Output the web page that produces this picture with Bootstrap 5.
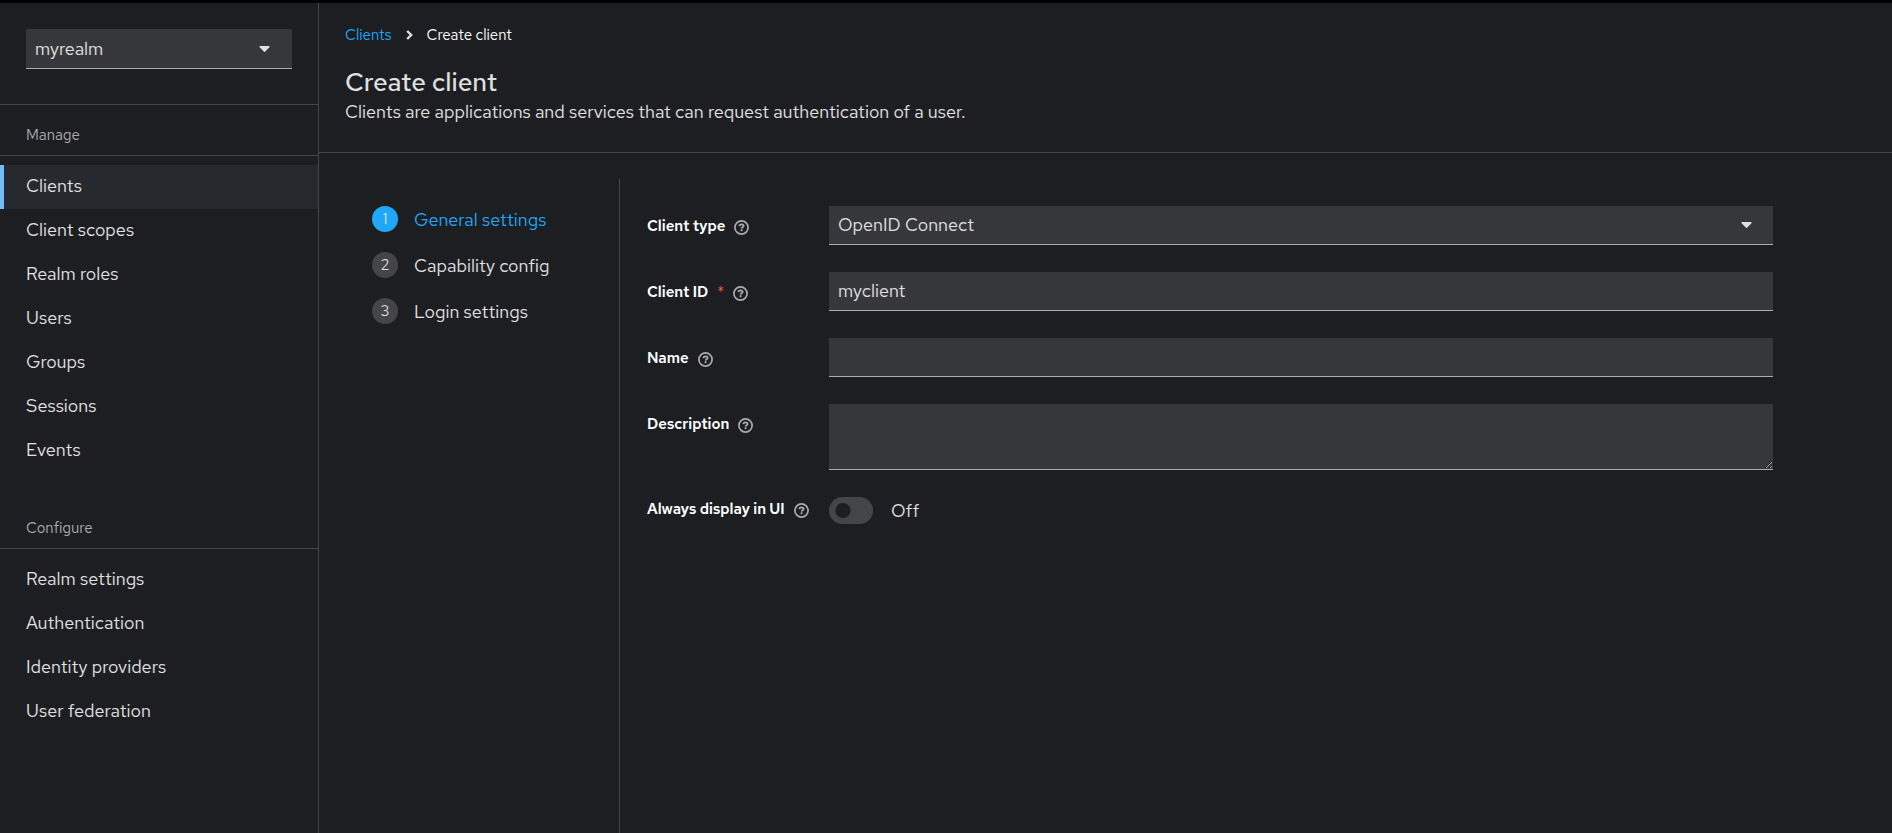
<!DOCTYPE html>
<html lang="en" data-bs-theme="dark">
<head>
<meta charset="utf-8">
<meta name="viewport" content="width=device-width, initial-scale=1">
<title>Create client</title>
<link href="https://cdn.jsdelivr.net/npm/bootstrap@5.3.0/dist/css/bootstrap.min.css" rel="stylesheet">
<style>
  :root {
    --console-bg: #1c1e22;
    --console-field: #36373b;
    --console-line: #444548;
    --console-text: #e0e0e0;
    --console-muted: #aaabac;
    --console-link: #1fa7f8;
  }
  body {
    background: var(--console-bg);
    color: var(--console-text);
    font-family: "Red Hat Text", Lato, "Open Sans", sans-serif;
    font-size: 18px;
    line-height: 26px;
    border-top: 3px solid #000;
  }
  a { text-decoration: none; }

  /* Sidebar */
  .console-sidebar {
    flex: 0 0 319px;
    border-right: 1px solid var(--console-line);
  }
  .realm-box {
    padding: 26px 26px 35px;
    border-bottom: 1px solid var(--console-line);
  }
  .realm-toggle {
    height: 40px;
    padding: 0 22px 0 9px;
    background: var(--console-field);
    color: var(--console-text);
    border: 0;
    border-bottom: 1px solid var(--console-muted);
  }
  .nav-heading {
    margin: 0;
    padding: 19px 26px 8px;
    font-size: 15px;
    line-height: 23px;
    font-weight: 400;
    color: var(--console-muted);
    border-bottom: 1px solid var(--console-line);
  }
  .nav-items { padding: 9px 0; }
  .nav-items .nav-link {
    padding: 8px 26px 10px;
    color: var(--console-text);
  }
  .nav-items .nav-link.active {
    padding-left: 22px;
    background: #26292d;
    border-left: 4px solid #73bcf7;
  }
  .nav-gap { height: 16px; }

  /* Page heading */
  .page-head {
    padding: 20px 26px 27px;
    border-bottom: 1px solid var(--console-line);
  }
  .crumbs {
    font-size: 15px;
    line-height: 24px;
    margin-bottom: 18px;
  }
  .crumbs svg { margin: 0 14px; }
  .crumbs a, .step.current { color: var(--console-link); }
  .page-title {
    font-size: 26px;
    line-height: 34px;
    font-weight: 500;
    margin: 0;
    color: var(--console-text);
  }

  /* Wizard */
  .wizard { padding: 26px 26px 0; }
  .wizard-steps {
    flex: 0 0 275px;
    padding: 27px 27px 0;
    border-right: 1px solid var(--console-line);
  }
  .wizard-steps ol { gap: 18px; }
  .step {
    padding: 0;
    border: 0;
    background: none;
    color: var(--console-text);
    gap: 16px;
    line-height: 28px;
  }
  .step-number {
    width: 26px;
    height: 26px;
    background: var(--console-line);
    color: var(--console-text);
    font-size: 15px;
    line-height: 26px;
  }
  .step.current .step-number { background: var(--console-link); }

  .client-form {
    padding: 27px 26px 26px 27px;
    max-width: 1179px;
    display: grid;
    grid-template-columns: 182px minmax(0, 1fr);
    row-gap: 27px;
  }
  .field-label {
    align-self: start;
    padding-top: 8px;
    font-size: 15px;
    line-height: 24px;
    color: #fff;
  }
  .field-label label { font-weight: 600; }
  .required-mark { color: #fe5142; margin-left: 9px; }
  .help-btn {
    padding: 3px 0 0;
    margin-left: 9px;
    border: 0;
    background: none;
    line-height: 0;
    color: var(--console-muted);
  }
  .field-control, .field-control:focus {
    height: 39px;
    padding: 0 9px 2px;
    background-color: var(--console-field);
    color: var(--console-text);
    border: 0;
    border-bottom: 1px solid var(--console-muted);
    border-radius: 0;
    font-size: 18px;
    box-shadow: none;
  }
  textarea.field-control, textarea.field-control:focus { height: 66px; min-height: 66px; }
  select.field-control, select.field-control:focus {
    background-image: url("data:image/svg+xml,%3Csvg xmlns='http://www.w3.org/2000/svg' viewBox='0 192 320 169'%3E%3Cpath fill='%23e0e0e0' d='M31.3 192h257.3c17.8 0 26.7 21.5 14.1 34.1L174.1 354.8c-7.8 7.8-20.5 7.8-28.3 0L17.2 226.1C4.6 213.5 13.5 192 31.3 192z'/%3E%3C/svg%3E");
    background-size: 11px 6px;
    background-position: right 21px center;
  }
  .ui-switch { margin: 0; padding: 0; min-height: 27px; gap: 18px; }
  .ui-switch .form-check-input, .ui-switch .form-check-input:focus {
    --bs-form-switch-bg: none;
    float: none;
    width: 44px;
    height: 27px;
    margin: 0;
    border: 0;
    box-shadow: none;
    background: radial-gradient(circle at 14px 50%, var(--console-bg) 7px, var(--console-line) 8px);
  }
  .ui-switch .form-check-input:checked {
    background: radial-gradient(circle at 30px 50%, #fff 7px, var(--console-link) 8px);
  }
</style>
</head>
<body class="d-flex min-vh-100">

<svg class="d-none" aria-hidden="true">
  <symbol id="help-icon" viewBox="0 0 15 15">
    <circle cx="7.5" cy="7.5" r="6.6" fill="none" stroke="currentColor" stroke-width="1.7"/>
    <path d="M5.4 6.1C5.5 4.9 6.4 4.4 7.5 4.4c1.2 0 2.1.6 2.1 1.6 0 1.3-1.9 1.3-2 2.6" fill="none" stroke="currentColor" stroke-width="1.8"/>
    <rect x="6.6" y="9.3" width="1.9" height="1.9" rx=".4" fill="currentColor"/>
  </symbol>
</svg>

<aside class="console-sidebar">
  <div class="realm-box">
    <button type="button" class="realm-toggle w-100 d-flex align-items-center justify-content-between" aria-haspopup="listbox">
      <span>myrealm</span>
      <svg width="11" height="6" viewBox="0 192 320 169" fill="currentColor" aria-hidden="true"><path d="M31.3 192h257.3c17.8 0 26.7 21.5 14.1 34.1L174.1 354.8c-7.8 7.8-20.5 7.8-28.3 0L17.2 226.1C4.6 213.5 13.5 192 31.3 192z"/></svg>
    </button>
  </div>
  <nav aria-label="Main">
    <h2 class="nav-heading">Manage</h2>
    <div class="nav-items nav flex-column">
      <a class="nav-link active" aria-current="page" href="#clients">Clients</a>
      <a class="nav-link" href="#client-scopes">Client scopes</a>
      <a class="nav-link" href="#roles">Realm roles</a>
      <a class="nav-link" href="#users">Users</a>
      <a class="nav-link" href="#groups">Groups</a>
      <a class="nav-link" href="#sessions">Sessions</a>
      <a class="nav-link" href="#events">Events</a>
    </div>
    <div class="nav-gap"></div>
    <h2 class="nav-heading">Configure</h2>
    <div class="nav-items nav flex-column">
      <a class="nav-link" href="#realm-settings">Realm settings</a>
      <a class="nav-link" href="#authentication">Authentication</a>
      <a class="nav-link" href="#identity-providers">Identity providers</a>
      <a class="nav-link" href="#user-federation">User federation</a>
    </div>
  </nav>
</aside>

<main class="flex-grow-1 d-flex flex-column">
  <header class="page-head">
    <nav class="crumbs d-flex align-items-center" aria-label="Breadcrumb">
      <a href="#clients">Clients</a>
      <svg width="7" height="10" viewBox="0 0 7 10" aria-hidden="true"><path d="M1.2 1 5.2 5l-4 4" fill="none" stroke="currentColor" stroke-width="2.4"/></svg>
      <span class="text-white" aria-current="page">Create client</span>
    </nav>
    <h1 class="page-title">Create client</h1>
    <p class="m-0">Clients are applications and services that can request authentication of a user.</p>
  </header>

  <div class="wizard d-flex flex-grow-1">
    <nav class="wizard-steps" aria-label="Wizard steps">
      <ol class="list-unstyled d-flex flex-column m-0">
        <li><button type="button" class="step current d-flex" aria-current="step"><span class="step-number rounded-circle text-center">1</span>General settings</button></li>
        <li><button type="button" class="step d-flex"><span class="step-number rounded-circle text-center">2</span>Capability config</button></li>
        <li><button type="button" class="step d-flex"><span class="step-number rounded-circle text-center">3</span>Login settings</button></li>
      </ol>
    </nav>

    <form class="client-form flex-grow-1 align-content-start">
      <div class="field-label d-flex align-items-center">
        <label for="client-type">Client type</label>
        <button type="button" class="help-btn" aria-label="Help for client type"><svg width="15" height="15"><use href="#help-icon"/></svg></button>
      </div>
      <select id="client-type" class="form-select field-control">
        <option>OpenID Connect</option>
        <option>SAML</option>
      </select>

      <div class="field-label d-flex align-items-center">
        <label for="client-id">Client ID</label><span class="required-mark" aria-hidden="true">*</span>
        <button type="button" class="help-btn" aria-label="Help for client ID"><svg width="15" height="15"><use href="#help-icon"/></svg></button>
      </div>
      <input id="client-id" type="text" class="form-control field-control" value="myclient" required>

      <div class="field-label d-flex align-items-center">
        <label for="client-name">Name</label>
        <button type="button" class="help-btn" aria-label="Help for name"><svg width="15" height="15"><use href="#help-icon"/></svg></button>
      </div>
      <input id="client-name" type="text" class="form-control field-control">

      <div class="field-label d-flex align-items-center">
        <label for="client-description">Description</label>
        <button type="button" class="help-btn" aria-label="Help for description"><svg width="15" height="15"><use href="#help-icon"/></svg></button>
      </div>
      <textarea id="client-description" class="form-control field-control"></textarea>

      <div class="field-label d-flex align-items-center pt-0">
        <label for="always-display">Always display in UI</label>
        <button type="button" class="help-btn" aria-label="Help for always display in UI"><svg width="15" height="15"><use href="#help-icon"/></svg></button>
      </div>
      <div class="form-check form-switch ui-switch d-flex align-items-center">
        <input id="always-display" type="checkbox" role="switch" class="form-check-input">
        <label for="always-display">Off</label>
      </div>
    </form>
  </div>
</main>

<script src="https://cdn.jsdelivr.net/npm/bootstrap@5.3.0/dist/js/bootstrap.bundle.min.js"></script>
</body>
</html>
